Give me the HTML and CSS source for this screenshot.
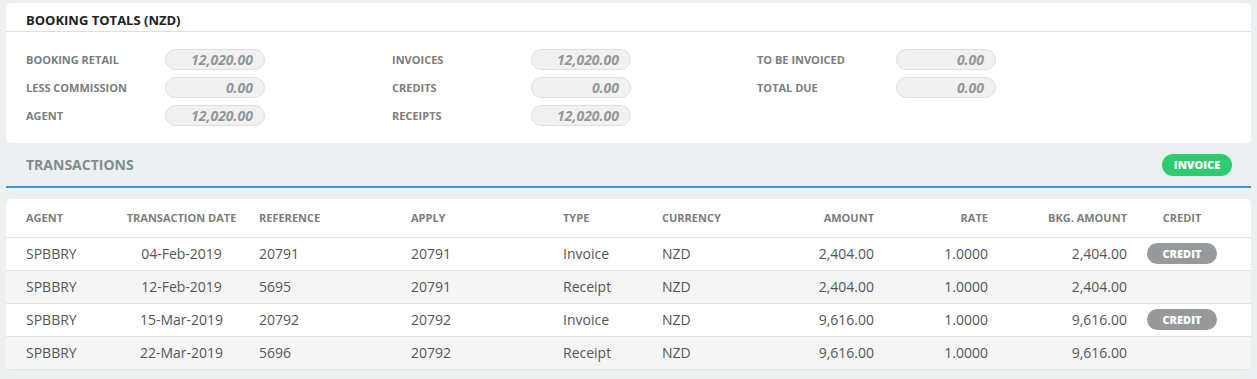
FILE: index.html
```html
<!DOCTYPE html>
<html>
<head>
<meta charset="utf-8">
<link rel="stylesheet" href="styles.css">
</head>
<body>
<section class="card totals-card">
  <h2 class="card-title">BOOKING TOTALS (NZD)</h2>
  <div class="totals">
    <div class="col">
      <div class="field"><span class="label">BOOKING RETAIL</span><span class="value">12,020.00</span></div>
      <div class="field"><span class="label">LESS COMMISSION</span><span class="value">0.00</span></div>
      <div class="field"><span class="label">AGENT</span><span class="value">12,020.00</span></div>
    </div>
    <div class="col">
      <div class="field"><span class="label">INVOICES</span><span class="value">12,020.00</span></div>
      <div class="field"><span class="label">CREDITS</span><span class="value">0.00</span></div>
      <div class="field"><span class="label">RECEIPTS</span><span class="value">12,020.00</span></div>
    </div>
    <div class="col">
      <div class="field"><span class="label">TO BE INVOICED</span><span class="value">0.00</span></div>
      <div class="field"><span class="label">TOTAL DUE</span><span class="value">0.00</span></div>
    </div>
  </div>
</section>

<div class="tx-head">
  <h2 class="tx-title">TRANSACTIONS</h2>
  <button class="btn btn-green">INVOICE</button>
</div>

<section class="card table-card">
  <table class="tx-table">
    <colgroup>
      <col class="c-agent"><col class="c-date"><col class="c-ref"><col class="c-apply"><col class="c-type"><col class="c-cur"><col class="c-amt"><col class="c-rate"><col class="c-bkg"><col class="c-credit">
    </colgroup>
    <thead>
      <tr>
        <th>AGENT</th><th class="center">TRANSACTION DATE</th><th>REFERENCE</th><th>APPLY</th><th>TYPE</th><th>CURRENCY</th><th class="right">AMOUNT</th><th class="right">RATE</th><th class="right">BKG. AMOUNT</th><th><span class="credit-head">CREDIT</span></th>
      </tr>
    </thead>
    <tbody>
      <tr>
        <td>SPBBRY</td><td class="center">04-Feb-2019</td><td>20791</td><td>20791</td><td>Invoice</td><td>NZD</td><td class="right">2,404.00</td><td class="right">1.0000</td><td class="right">2,404.00</td><td><button class="btn btn-gray">CREDIT</button></td>
      </tr>
      <tr class="alt">
        <td>SPBBRY</td><td class="center">12-Feb-2019</td><td>5695</td><td>20791</td><td>Receipt</td><td>NZD</td><td class="right">2,404.00</td><td class="right">1.0000</td><td class="right">2,404.00</td><td></td>
      </tr>
      <tr>
        <td>SPBBRY</td><td class="center">15-Mar-2019</td><td>20792</td><td>20792</td><td>Invoice</td><td>NZD</td><td class="right">9,616.00</td><td class="right">1.0000</td><td class="right">9,616.00</td><td><button class="btn btn-gray">CREDIT</button></td>
      </tr>
      <tr class="alt">
        <td>SPBBRY</td><td class="center">22-Mar-2019</td><td>5696</td><td>20792</td><td>Receipt</td><td>NZD</td><td class="right">9,616.00</td><td class="right">1.0000</td><td class="right">9,616.00</td><td></td>
      </tr>
    </tbody>
  </table>
</section>
</body>
</html>
```

FILE: styles.css
```css
* { box-sizing: border-box; }

body {
  margin: 0;
  padding: 3px 6px 0 6px;
  background: #ecf0f1;
  font-family: "Open Sans", "Liberation Sans", sans-serif;
  color: #555;
}

.card {
  background: #fff;
  border-radius: 5px;
}

.totals-card {
  height: 140px;
}

.card-title {
  margin: 0;
  height: 29px;
  padding: 9px 20px 0 20px;
  font-size: 13px;
  line-height: 16px;
  font-weight: 700;
  color: #222;
  border-bottom: 1px solid #dcdcee;
}

.totals {
  display: grid;
  grid-template-columns: 366px 365px 365px;
  padding: 17px 20px 0 20px;
}

.col {
  display: flex;
  flex-direction: column;
  gap: 7px;
}

.field {
  display: flex;
  align-items: center;
  height: 21px;
}

.label {
  width: 139px;
  font-size: 11px;
  font-weight: 700;
  color: #7d7d7d;
}

.value {
  width: 100px;
  height: 21px;
  border: 1px solid #dedede;
  border-radius: 11px;
  background: #f1f1f1;
  text-align: right;
  padding-right: 11px;
  font-size: 14px;
  line-height: 19px;
  font-style: italic;
  font-weight: 700;
  color: #92979b;
}

.tx-head {
  display: flex;
  align-items: center;
  justify-content: space-between;
  height: 45px;
  padding: 0 19px 0 20px;
  border-bottom: 2px solid #3498db;
}

.tx-title {
  margin: 0;
  font-size: 14px;
  font-weight: 700;
  color: #7f8c8d;
}

.btn {
  border: 0;
  width: 70px;
  padding: 0;
  font-family: "Open Sans", "Liberation Sans", sans-serif;
  font-weight: 800;
  color: #fff;
  cursor: pointer;
}

.btn-green {
  height: 22px;
  border-radius: 11px;
  background: #2ecc71;
  font-size: 11px;
}

.btn-gray {
  height: 21px;
  border-radius: 11px;
  background: #979a9d;
  font-size: 11px;
}

.table-card {
  margin-top: 11px;
  overflow: hidden;
}

.tx-table {
  width: 100%;
  border-collapse: collapse;
  table-layout: fixed;
}

.c-agent { width: 108px; }
.c-date { width: 135px; }
.c-ref { width: 152px; }
.c-apply { width: 152px; }
.c-type { width: 99px; }
.c-cur { width: 100px; }
.c-amt { width: 132px; }
.c-rate { width: 114px; }
.c-bkg { width: 139px; }
.c-credit { width: auto; }

.tx-table th,
.tx-table td {
  padding: 0 10px;
  text-align: left;
  white-space: nowrap;
}

.tx-table th:first-child,
.tx-table td:first-child {
  padding-left: 20px;
}

.tx-table th {
  height: 38px;
  font-size: 11px;
  font-weight: 700;
  color: #7d7d7d;
  border-bottom: 1px solid #e2e2e2;
}

.tx-table td {
  height: 33px;
  font-size: 14px;
  color: #555;
  border-bottom: 1px solid #e2e2e2;
}

.tx-table tr.alt td {
  background: #f5f5f5;
}

.tx-table .center { text-align: center; }
.tx-table .right { text-align: right; }

.credit-head {
  display: inline-block;
  width: 70px;
  text-align: center;
}
```
